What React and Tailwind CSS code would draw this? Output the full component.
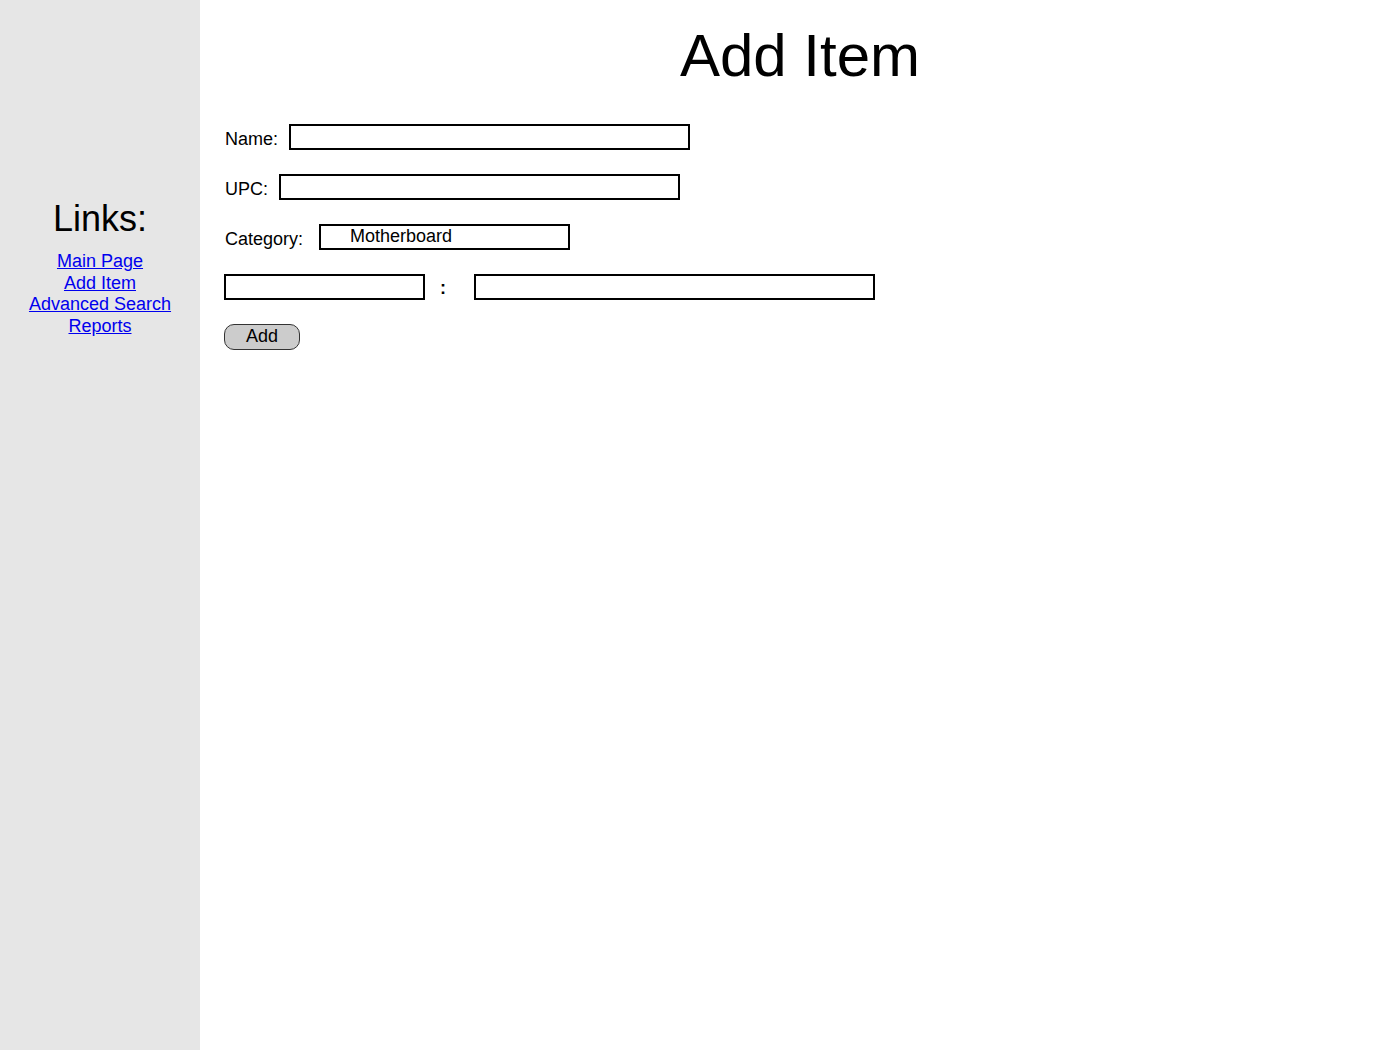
import React from "react";

const font = { fontFamily: '"Liberation Sans", Arial, sans-serif' };

const links = ["Main Page", "Add Item", "Advanced Search", "Reports"];

const Sidebar = () => (
  <aside className="w-[200px] shrink-0 bg-[#e6e6e6] pt-[198px] text-center">
    <h2 className="text-[36px] leading-[41px] text-black">Links:</h2>
    <ul className="mt-[12px] text-[18px] leading-[21.5px]">
      {links.map((link) => (
        <li key={link}>
          <a href="#" className="text-[#0000ee] underline">
            {link}
          </a>
        </li>
      ))}
    </ul>
  </aside>
);

const Box = ({ className = "", children }) => (
  <div
    className={`h-[26px] shrink-0 border-2 border-black bg-white ${className}`}
  >
    {children}
  </div>
);

const Label = ({ children }) => (
  <span className="mt-[5px] pl-px text-[18px] leading-[20px] text-black">
    {children}
  </span>
);

export default function App() {
  return (
    <div className="flex min-h-[1050px] bg-white" style={font}>
      <Sidebar />

      {/* Form area */}
      <main className="flex-1 pl-[24px]">
        <h1 className="pt-[21px] pr-[24px] text-center text-[60px] leading-[69px] text-black">
          Add Item
        </h1>

        <div className="mt-[34px] flex flex-col gap-[24px]">
          <div className="flex h-[26px] items-start">
            <Label>Name:</Label>
            <Box className="ml-[11px] w-[401px]" />
          </div>

          <div className="flex h-[26px] items-start">
            <Label>UPC:</Label>
            <Box className="ml-[11px] w-[401px]" />
          </div>

          <div className="flex h-[26px] items-start">
            <Label>Category:</Label>
            <Box className="ml-[16px] w-[251px]">
              <span className="block pl-[29px] text-[18px] leading-[20px] text-black">
                Motherboard
              </span>
            </Box>
          </div>

          <div className="flex h-[26px] items-start">
            <Box className="w-[201px]" />
            <span className="ml-[15px] mt-[4px] text-[18px] font-bold leading-[20px] text-black">
              :
            </span>
            <Box className="ml-[28px] w-[401px]" />
          </div>

          <div className="flex h-[26px]">
            <button className="h-[26px] w-[76px] rounded-[10px] border border-[#333333] bg-[#cccccc] text-center text-[18px] leading-[20px] text-black">
              <span className="block -mt-[3px]">Add</span>
            </button>
          </div>
        </div>
      </main>
    </div>
  );
}
